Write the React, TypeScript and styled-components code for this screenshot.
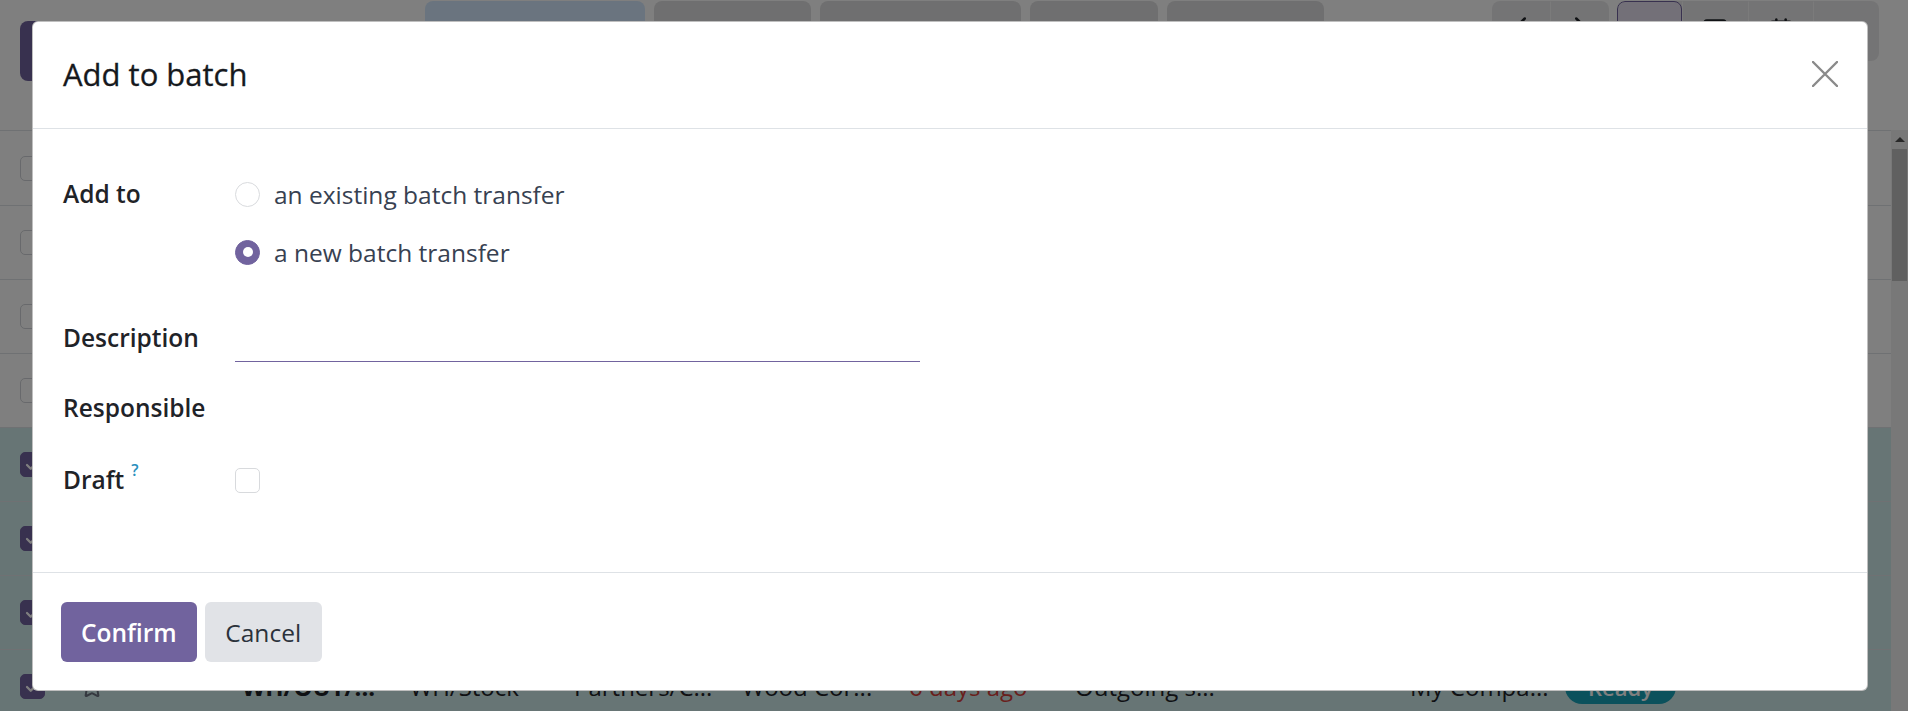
import React from "react";
import styled, { createGlobalStyle } from "styled-components";
import { ChevronLeft, ChevronRight, List, SquareKanban, CalendarDays, Activity, Star, Check } from "lucide-react";

const GlobalStyle = createGlobalStyle`
  html, body { margin: 0; padding: 0; }
  body { font-family: "Open Sans", "Noto Sans", sans-serif; background: #fff; }
  * { box-sizing: border-box; }
`;

const Page = styled.div`
  position: relative;
  width: 1908px;
  height: 711px;
  overflow: hidden;
  background: #fff;
  display: flex;
  flex-direction: column;
`;

/* ---------- background: list view ---------- */

const ControlPanel = styled.div`
  height: 130px;
  flex: none;
  display: flex;
  align-items: flex-start;
  padding: 1px 29px 0 20px;
`;

const NewButton = styled.div`
  flex: none;
  width: 128px;
  height: 60px;
  margin-top: 20px;
  border-radius: 8px;
  background: #71639e;
`;

const FilterGroup = styled.div`
  display: flex;
  gap: 9px;
  margin-left: 277px;
`;

const PanelButton = styled.div<{ $w: number; $tone?: "info" | "plain" }>`
  width: ${(p) => p.$w}px;
  height: 60px;
  border-radius: 8px;
  background: ${(p) => (p.$tone === "info" ? "#d4e9ff" : "#dfdfe0")};
`;

const RightGroup = styled.div`
  margin-left: auto;
  display: flex;
  gap: 8px;
`;

const SegGroup = styled.div`
  display: flex;
  height: 60px;
  border-radius: 8px;
  overflow: hidden;
  background: #e9e9ea;
`;

const SegItem = styled.div<{ $w: number; $active?: boolean; $lift?: number }>`
  width: ${(p) => p.$w}px;
  height: 60px;
  display: flex;
  align-items: center;
  justify-content: center;
  padding-bottom: ${(p) => p.$lift ?? 0}px;
  color: #1f2328;
  background: ${(p) => (p.$active ? "#e6e1f0" : "transparent")};
  border: 1px solid ${(p) => (p.$active ? "#71639e" : "transparent")};
  border-radius: ${(p) => (p.$active ? "8px" : "0")};
  & + & {
    border-left: 1px solid ${(p) => (p.$active ? "#71639e" : "#f6f6f6")};
  }
`;

const ListArea = styled.div`
  flex: 1;
  display: flex;
  min-height: 0;
`;

const ListTable = styled.div`
  flex: 1;
  border-top: 1px solid #dee2e6;
`;

const Row = styled.div<{ $selected?: boolean; $h?: number }>`
  height: ${(p) => p.$h ?? 74}px;
  display: grid;
  grid-template-columns: 60px 182px 168px 164px 168px 167px 166px 335px 155px 1fr;
  align-items: center;
  border-bottom: 1px solid #dee2e6;
  background: ${(p) => (p.$selected ? "#cfebea" : "transparent")};
  font-size: 24px;
  color: #374151;
  white-space: nowrap;
`;

const RowCheck = styled.div<{ $on?: boolean }>`
  margin-left: 20px;
  width: 25px;
  height: 25px;
  border-radius: 5px;
  border: 1px solid ${(p) => (p.$on ? "#71639e" : "#d0d3d8")};
  background: ${(p) => (p.$on ? "#71639e" : "#fff")};
  display: flex;
  align-items: center;
  justify-content: center;
  color: #fff;
`;

const StarCell = styled.div`
  padding-left: 20px;
  display: flex;
  color: #6b7280;
`;

const Cell = styled.div<{ $bold?: boolean; $danger?: boolean }>`
  font-weight: ${(p) => (p.$bold ? 700 : 400)};
  color: ${(p) => (p.$danger ? "#d23f3a" : "#1f2328")};
`;

const Badge = styled.span`
  display: inline-block;
  padding: 2px 23px;
  border-radius: 999px;
  background: #17a2b8;
  color: #fff;
  font-size: 22px;
  font-weight: 600;
`;

const Scrollbar = styled.div`
  flex: none;
  width: 17px;
  background: #f1f1f1;
  display: flex;
  flex-direction: column;
  align-items: center;
`;

const ScrollArrow = styled.div`
  margin-top: 7px;
  width: 0;
  height: 0;
  border-left: 5px solid transparent;
  border-right: 5px solid transparent;
  border-bottom: 5px solid #505050;
`;

const ScrollThumb = styled.div`
  margin-top: 7px;
  width: 15px;
  height: 132px;
  background: #c1c1c1;
`;

/* ---------- modal ---------- */

const Backdrop = styled.div`
  position: absolute;
  inset: 0;
  background: rgba(0, 0, 0, 0.5);
  padding: 21px 40px 0 32px;
`;

const Dialog = styled.div`
  width: 1836px;
  height: 670px;
  background: #fff;
  border: 1px solid rgba(0, 0, 0, 0.25);
  border-radius: 6px;
  display: flex;
  flex-direction: column;
  overflow: hidden;
`;

const Header = styled.div`
  flex: none;
  height: 107px;
  padding: 0 29px 0 30px;
  display: flex;
  align-items: center;
  justify-content: space-between;
  border-bottom: 1px solid #dee2e6;
`;

const Title = styled.h4`
  margin: 0;
  font-size: 31px;
  font-weight: 400;
  line-height: 1.2;
  color: #16191d;
  -webkit-text-stroke: 0.3px #16191d;
`;

const CloseButton = styled.button`
  border: 0;
  background: none;
  padding: 0;
  width: 26px;
  height: 26px;
  margin-bottom: 2px;
  display: flex;
`;

const Body = styled.div`
  flex: none;
  height: 443px;
  padding: 43px 30px 0;
`;

const FormRow = styled.div<{ $top?: number; $h?: number }>`
  display: grid;
  grid-template-columns: 172px 685px;
  align-items: start;
  margin-top: ${(p) => p.$top ?? 0}px;
  min-height: ${(p) => p.$h ?? 48}px;
`;

const FieldLabel = styled.div<{ $lh?: number }>`
  font-size: 24.5px;
  font-weight: 600;
  color: #1f2328;
  line-height: ${(p) => p.$lh ?? 48}px;
  height: ${(p) => p.$lh ?? 48}px;
  white-space: nowrap;
`;

const Help = styled.span`
  display: inline-block;
  vertical-align: top;
  line-height: 1;
  margin: 6px 0 0 7px;
  color: #2a8fbd;
  font-size: 16px;
  font-weight: 600;
`;

const Options = styled.div`
  display: flex;
  flex-direction: column;
  gap: 14px;
`;

const Option = styled.label`
  height: 44px;
  display: flex;
  align-items: center;
  gap: 14px;
  font-size: 24.5px;
  color: #374151;
`;

const Radio = styled.span<{ $checked?: boolean }>`
  flex: none;
  width: 25px;
  height: 25px;
  border-radius: 50%;
  border: 1px solid ${(p) => (p.$checked ? "#71639e" : "#d8dadd")};
  background: ${(p) => (p.$checked ? "#71639e" : "#fff")};
  display: flex;
  align-items: center;
  justify-content: center;
  &::after {
    content: "";
    display: ${(p) => (p.$checked ? "block" : "none")};
    width: 10px;
    height: 10px;
    border-radius: 50%;
    background: #fff;
  }
`;

const TextInput = styled.div`
  height: 48px;
  border-bottom: 1px solid #71639e;
`;

const Control = styled.div`
  height: 48px;
  display: flex;
  align-items: center;
`;

const CheckBox = styled.span`
  width: 25px;
  height: 25px;
  border-radius: 5px;
  border: 1px solid #d8dadd;
  background: #fff;
`;

const Footer = styled.div`
  flex: 1;
  border-top: 1px solid #dee2e6;
  padding: 29px 28px 28px;
  display: flex;
  gap: 8px;
`;

const Button = styled.button<{ $primary?: boolean }>`
  height: 60px;
  padding: 0 20px;
  border: 0;
  border-radius: 6px;
  font-family: inherit;
  font-size: 24.5px;
  font-weight: ${(p) => (p.$primary ? 600 : 400)};
  background: ${(p) => (p.$primary ? "#71639e" : "#e1e3e7")};
  color: ${(p) => (p.$primary ? "#fff" : "#2b323b")};
  min-width: ${(p) => (p.$primary ? 135 : 117)}px;
`;

const rows = [
  { sel: false },
  { sel: false },
  { sel: false },
  { sel: true },
  { sel: true },
  { sel: true },
];

export default function App() {
  return (
    <>
      <GlobalStyle />
      <Page>
        <ControlPanel>
          <NewButton />
          <FilterGroup>
            <PanelButton $w={220} $tone="info" />
            <PanelButton $w={157} />
            <PanelButton $w={201} />
            <PanelButton $w={128} />
            <PanelButton $w={157} />
          </FilterGroup>
          <RightGroup>
            <SegGroup>
              <SegItem $w={58} $lift={10}><ChevronLeft size={30} /></SegItem>
              <SegItem $w={59} $lift={10}><ChevronRight size={30} /></SegItem>
            </SegGroup>
            <SegGroup>
              <SegItem $w={65} $active><List size={22} /></SegItem>
              <SegItem $w={66}><SquareKanban size={28} /></SegItem>
              <SegItem $w={65}><CalendarDays size={28} /></SegItem>
              <SegItem $w={66}><Activity size={22} /></SegItem>
            </SegGroup>
          </RightGroup>
        </ControlPanel>
        <ListArea>
          <ListTable>
            <Row $h={75}>
              <RowCheck />
            </Row>
            {rows.map((r, i) => (
              <Row key={i} $selected={r.sel}>
                <RowCheck $on={r.sel}>{r.sel && <Check size={18} strokeWidth={3} />}</RowCheck>
              </Row>
            ))}
            <Row $selected>
              <RowCheck $on><Check size={18} strokeWidth={3} /></RowCheck>
              <StarCell><Star size={24} /></StarCell>
              <Cell $bold>WH/OUT/...</Cell>
              <Cell>WH/Stock</Cell>
              <Cell>Partners/C...</Cell>
              <Cell>Wood Cor...</Cell>
              <Cell $danger>6 days ago</Cell>
              <Cell>Outgoing s...</Cell>
              <Cell>My Compa...</Cell>
              <Cell><Badge>Ready</Badge></Cell>
            </Row>
          </ListTable>
          <Scrollbar>
            <ScrollArrow />
            <ScrollThumb />
          </Scrollbar>
        </ListArea>

        <Backdrop>
          <Dialog role="dialog">
            <Header>
              <Title>Add to batch</Title>
              <CloseButton aria-label="Close">
                <svg width="26" height="26" viewBox="0 0 26 26">
                  <path d="M1 1 L25 25 M25 1 L1 25" stroke="#8a8a8a" strokeWidth="2.4" strokeLinecap="round" />
                </svg>
              </CloseButton>
            </Header>
            <Body>
              <FormRow $h={102}>
                <FieldLabel $lh={44}>Add to</FieldLabel>
                <Options>
                  <Option><Radio />an existing batch transfer</Option>
                  <Option><Radio $checked />a new batch transfer</Option>
                </Options>
              </FormRow>
              <FormRow $top={40}>
                <FieldLabel>Description</FieldLabel>
                <TextInput />
              </FormRow>
              <FormRow $top={22}>
                <FieldLabel>Responsible</FieldLabel>
                <Control />
              </FormRow>
              <FormRow $top={24}>
                <FieldLabel>Draft<Help>?</Help></FieldLabel>
                <Control><CheckBox /></Control>
              </FormRow>
            </Body>
            <Footer>
              <Button $primary>Confirm</Button>
              <Button>Cancel</Button>
            </Footer>
          </Dialog>
        </Backdrop>
      </Page>
    </>
  );
}
